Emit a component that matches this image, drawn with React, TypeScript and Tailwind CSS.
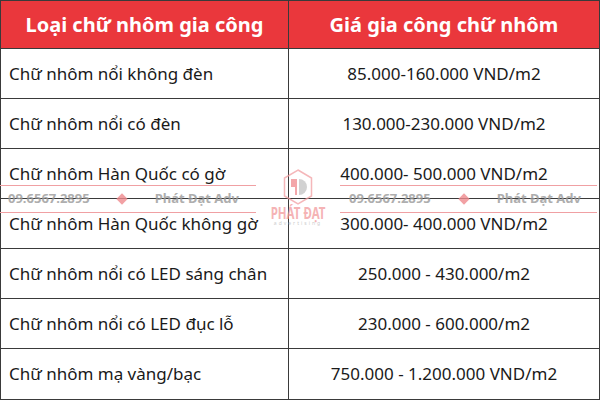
import React from "react";

const rows: [string, string][] = [
  ["Chữ nhôm nổi không đèn", "85.000-160.000 VND/m2"],
  ["Chữ nhôm nổi có đèn", "130.000-230.000 VND/m2"],
  ["Chữ nhôm Hàn Quốc có gờ", "400.000- 500.000 VND/m2"],
  ["Chữ nhôm Hàn Quốc không gờ", "300.000- 400.000 VND/m2"],
  ["Chữ nhôm nổi có LED sáng chân", "250.000 - 430.000/m2"],
  ["Chữ nhôm nổi có LED đục lỗ", "230.000 - 600.000/m2"],
  ["Chữ nhôm mạ vàng/bạc", "750.000 - 1.200.000 VND/m2"],
];

function WatermarkBand({ pl, pr }: { pl: string; pr: string }) {
  return (
    <div className="flex-1 flex flex-col justify-between h-[28px]">
      <div className="h-px bg-[#f0a0a3]" />
      <div className={`flex items-center justify-between ${pl} ${pr} text-[13px] font-bold text-[#9a9a9a] opacity-80`}>
        <span>09.6567.2895</span>
        <span className="w-[8px] h-[8px] bg-[#f08a8e] rotate-45" />
        <span>Phát Đạt Adv</span>
      </div>
      <div className="h-px bg-[#f0a0a3]" />
    </div>
  );
}

export default function App() {
  return (
    <div
      className="relative w-[600px] h-[400px] bg-white overflow-hidden"
      style={{ fontFamily: '"Noto Sans", "Open Sans", sans-serif' }}
    >
      <div className="w-[600px] h-[400px] border border-[#3a3a3a] flex flex-col">
        <div className="h-[48px] flex bg-[#ea373c] text-white font-bold text-[20px] border-b border-[#3a3a3a]">
          <div className="w-[288px] flex items-center justify-center border-r border-[#3a3a3a]">
            Loại chữ nhôm gia công
          </div>
          <div className="flex-1 flex items-center justify-center">Giá gia công chữ nhôm</div>
        </div>
        {rows.map(([a, b], i) => (
          <div
            key={i}
            className={`h-[50px] flex text-[17px] text-[#1a1a1a] ${i < rows.length - 1 ? "border-b border-[#3a3a3a]" : ""}`}
          >
            <div className="w-[288px] flex items-center pl-[8px] border-r border-[#3a3a3a]">{a}</div>
            <div className="flex-1 flex items-center justify-center">{b}</div>
          </div>
        ))}
      </div>
      {/* watermark overlay */}
      <div className="absolute left-0 top-[185px] w-[600px] flex items-center pointer-events-none">
        <div className="w-[256px] flex">
          <WatermarkBand pl="pl-[8px]" pr="pr-[17px]" />
        </div>
        <div className="w-[84px] relative h-[28px]">
          <div className="absolute left-[12px] top-[-16px] flex flex-col items-center w-[60px] opacity-75">
            <svg width="30" height="36" viewBox="0 0 30 36">
              <polygon points="15,1 28.5,9 28.5,27 15,35 1.5,27 1.5,9" fill="none" stroke="#f2a0a3" strokeWidth="1.5" />
              <path d="M8 10 h6 v16 h-2 v-8 h-4 z" fill="#f08a8e" />
              <path d="M16 10 a8 8 0 0 1 0 16 z" fill="#c4c4c4" />
            </svg>
            <div className="whitespace-nowrap text-[16px] leading-[14px] font-bold text-[#f29a9d] scale-x-[0.72] mt-[1px]">PHÁT ĐẠT</div>
            <div className="whitespace-nowrap text-[5px] leading-[6px] text-[#bbbbbb] tracking-[2px]">advertising</div>
          </div>
        </div>
        <div className="flex-1 flex pr-[3px]">
          <WatermarkBand pl="pl-[9px]" pr="pr-[16px]" />
        </div>
      </div>
    </div>
  );
}
